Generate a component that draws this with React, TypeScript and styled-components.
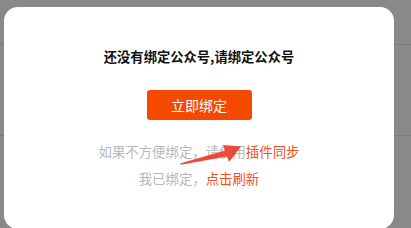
import React from "react";
import styled, { createGlobalStyle } from "styled-components";

const Global = createGlobalStyle`
  html, body { margin: 0; padding: 0; }
  body {
    width: 411px; height: 228px; overflow: hidden;
    background: #898989;
    font-family: "Noto Sans CJK SC", "Noto Sans", sans-serif;
  }
`;

const Page = styled.div`
  position: relative;
  width: 411px;
  height: 228px;
  overflow: hidden;
  background: #898989;
`;

const Rows = styled.div`
  display: flex;
  flex-direction: column;
`;

const Row = styled.div<{ $h: number }>`
  height: ${(p) => p.$h}px;
  border-bottom: 1px solid #7c7c7c;
`;

const Modal = styled.div`
  position: absolute;
  left: 4px;
  top: 7px;
  width: 390px;
  height: 222px;
  background: #fff;
  border-radius: 14px;
  display: flex;
  flex-direction: column;
  align-items: center;
  padding-top: 40px;
  box-sizing: border-box;
`;

const Title = styled.div`
  font-size: 13.3px;
  line-height: 20px;
  font-weight: 700;
  color: #111;
  letter-spacing: 0;
`;

const Button = styled.button`
  margin-top: 23px;
  width: 105px;
  height: 30px;
  border: none;
  border-radius: 3px;
  background: #f54900;
  color: #fff;
  font-family: inherit;
  font-size: 14px;
  padding: 0;
`;

const Hint = styled.div<{ $first?: boolean }>`
  margin-top: ${(p) => (p.$first ? "18px" : "0")};
  font-size: 13.4px;
  line-height: 27px;
  color: #b8b8b8;
`;

const Link = styled.span`
  color: #f5501a;
`;

const Arrow = styled.svg`
  position: absolute;
  left: 0;
  top: 0;
  pointer-events: none;
`;

export default function App() {
  return (
    <>
      <Global />
      <Page>
        <Rows>
          <Row $h={44} />
          <Row $h={90} />
          <Row $h={120} />
        </Rows>
        <Modal>
          <Title>还没有绑定公众号,请绑定公众号</Title>
          <Button>立即绑定</Button>
          <Hint $first>
            如果不方便绑定，请使用<Link>插件同步</Link>
          </Hint>
          <Hint>
            我已绑定，<Link>点击刷新</Link>
          </Hint>
        </Modal>
        <Arrow width="411" height="228" viewBox="0 0 411 228">
          <polygon
            points="180,163.5 225,150.5 223,145 241,146.5 229,162 227,156.5 181,164.8"
            fill="#ee4a3c"
          />
        </Arrow>
      </Page>
    </>
  );
}
